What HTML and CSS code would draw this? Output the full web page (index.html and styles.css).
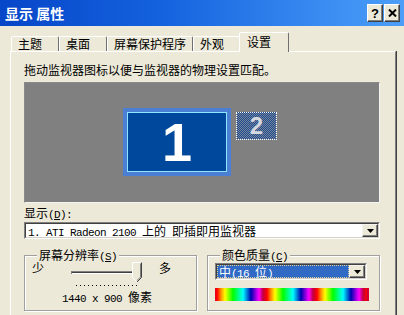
FILE: index.html
```html
<!DOCTYPE html>
<html lang="zh-CN">
<head>
<meta charset="utf-8">
<title>显示 属性</title>
<link rel="stylesheet" href="styles.css">
</head>
<body>
<div class="titlebar">
  <span class="title">显示 属性</span>
  <div class="tbtns">
    <span class="tbtn">?</span>
    <span class="tbtn"><svg width="9" height="8" viewBox="0 0 9 8"><path d="M1 0.5 L8 7.5 M8 0.5 L1 7.5" stroke="#000" stroke-width="2"/></svg></span>
  </div>
</div>
<div class="tabs">
  <div class="tab">主题</div>
  <div class="tab">桌面</div>
  <div class="tab">屏幕保护程序</div>
  <div class="tab">外观</div>
  <div class="tab active">设置</div>
</div>
<div class="panel">
  <p class="hint">拖动监视器图标以便与监视器的物理设置匹配。</p>
  <div class="canvas">
    <div class="mon mon1">1</div>
    <div class="mon mon2">2</div>
  </div>
  <div class="label">显示<span class="mono">(<u>D</u>):</span></div>
  <div class="select">
    <div class="select-in">
      <div class="val"><span class="mono">1. ATI Radeon 2100 </span>上的<span class="mono"> </span>即插即用监视器</div>
      <div class="drop"><svg width="7" height="4" viewBox="0 0 7 4"><path d="M0 0 H7 L3.5 4 Z" fill="#000"/></svg></div>
    </div>
  </div>
  <div class="groups">
    <fieldset class="group res">
      <legend>屏幕分辨率<span class="mono">(<u>S</u>)</span></legend>
      <div class="res-row">
        <span class="few">少</span>
        <svg class="slider" width="76" height="26" viewBox="0 0 76 26">
          <rect x="2" y="10" width="70" height="1" fill="#808080"/>
          <rect x="2" y="11" width="70" height="1" fill="#404040"/>
          <rect x="2" y="12" width="70" height="1" fill="#ffffff"/>
          <rect x="2" y="10" width="1" height="3" fill="#808080"/>
          <path d="M63.5 1.5 H72.5 V16.5 L68 21 L63.5 16.5 Z" fill="#ECE9D8"/>
          <path d="M63.5 16.5 V1.5 H72.5" stroke="#ffffff" fill="none"/>
          <path d="M63.5 16.5 L68 21" stroke="#ffffff" fill="none"/>
          <path d="M72.5 1.5 V16.5 L68 21" stroke="#404040" fill="none"/>
          <path d="M71.5 2.5 V16 L68 19.5" stroke="#808080" fill="none"/>
          <g fill="#000">
            <rect x="7" y="24" width="1" height="1"/><rect x="11" y="24" width="1" height="1"/>
            <rect x="15" y="24" width="1" height="1"/><rect x="19" y="24" width="1" height="1"/>
            <rect x="23" y="24" width="1" height="1"/><rect x="27" y="24" width="1" height="1"/>
            <rect x="31" y="24" width="1" height="1"/><rect x="35" y="24" width="1" height="1"/>
            <rect x="39" y="24" width="1" height="1"/><rect x="43" y="24" width="1" height="1"/>
            <rect x="47" y="24" width="1" height="1"/><rect x="51" y="24" width="1" height="1"/>
            <rect x="55" y="24" width="1" height="1"/><rect x="59" y="24" width="1" height="1"/>
            <rect x="63" y="24" width="1" height="1"/><rect x="67" y="24" width="1" height="1"/>
          </g>
        </svg>
        <span class="many">多</span>
      </div>
      <div class="res-text"><span class="mono">1440 x 900 </span>像素</div>
    </fieldset>
    <fieldset class="group colors">
      <legend>颜色质量<span class="mono">(<u>C</u>)</span></legend>
      <div class="select small">
        <div class="select-in">
          <div class="val hl">中<span class="mono">(16 </span>位<span class="mono">)</span></div>
          <div class="drop"><svg width="7" height="4" viewBox="0 0 7 4"><path d="M0 0 H7 L3.5 4 Z" fill="#000"/></svg></div>
        </div>
      </div>
      <div class="rainbow"></div>
    </fieldset>
  </div>
</div>
</body>
</html>
```
FILE: styles.css
```css
* { box-sizing: border-box; }
html, body { margin: 0; padding: 0; }
body {
  width: 404px;
  height: 315px;
  overflow: hidden;
  background: #ECE9D8;
  font-family: "Noto Sans CJK SC", sans-serif;
  font-size: 12px;
  line-height: 14px;
  color: #000;
}
.mono {
  font-family: "Liberation Mono", "Noto Sans CJK SC", monospace;
  font-size: 11px;
  letter-spacing: -0.6px;
  line-height: 10px;
}

.titlebar {
  height: 26px;
  display: flex;
  align-items: center;
  padding: 0 4px 0 5px;
  background: linear-gradient(to right, #0646c8 0%, #1462de 40%, #3a8cf2 80%, #4c9ef7 100%);
}
.title { flex: 1; color: #fff; font-weight: bold; font-size: 14px; line-height: 16px; }
.tbtns { display: flex; gap: 1px; }
.tbtn {
  width: 16px;
  height: 18px;
  display: flex;
  align-items: center;
  justify-content: center;
  background: #ECE9D8;
  border: 1px solid;
  border-color: #fff #404040 #404040 #fff;
  box-shadow: inset -1px -1px 0 #808080;
  font: bold 13px/1 "Liberation Sans", sans-serif;
}

.tabs {
  display: flex;
  align-items: flex-end;
  height: 25px;
  padding-left: 11px;
  position: relative;
  z-index: 1;
}
.tab {
  min-width: 48px;
  height: 15px;
  padding: 0 6px;
  border: 1px solid;
  border-bottom: none;
  border-color: #fff #707070 transparent #fff;
  border-radius: 2px 2px 0 0;
  white-space: nowrap;
  background: #ECE9D8;
}
.tab.active {
  min-width: 50px;
  height: 20px;
  margin: 0 -2px -1px -2px;
  padding: 2px 6px 0 7px;
  position: relative;
}

.panel {
  margin: 0 8px 0 10px;
  height: 270px;
  padding: 11px 15px 0 13px;
  border-top: 1px solid #fff;
  border-left: 1px solid #fff;
  border-right: 1px solid #808080;
  box-shadow: 1px 0 0 #404040;
}
.hint { margin: 0 0 5px; }

.canvas {
  position: relative;
  height: 121px;
  background: #808080;
  border: 1px solid;
  border-color: #8a8a8a #f4f4f4 #f4f4f4 #8a8a8a;
}
.mon {
  position: absolute;
  display: flex;
  align-items: center;
  justify-content: center;
  font-family: "Liberation Sans", sans-serif;
  font-weight: bold;
  line-height: 1;
}
.mon1 {
  left: 98px;
  top: 25px;
  width: 108px;
  height: 68px;
  border: 4px solid #4a7fd3;
  background: #00489c;
  box-shadow: inset 0 0 0 1px #8fe6ff;
  color: #fff;
  font-size: 54px;
}
.mon2 {
  left: 211px;
  top: 29px;
  width: 41px;
  height: 28px;
  border: 1px dotted #fff;
  background: repeating-conic-gradient(#184c96 0 25%, #7c8494 0 50%) 0 0 / 2px 2px;
  color: #d6d8e0;
  font-size: 24px;
}

.label { margin-top: 3px; height: 14px; }
.select {
  margin-top: 2px;
  height: 17px;
  border: 1px solid;
  border-color: #808080 #fff #fff #808080;
}
.select-in {
  display: flex;
  height: 100%;
  background: #fff;
  border: 1px solid;
  border-color: #404040 #d4d0c8 #d4d0c8 #404040;
}
.val {
  flex: 1;
  padding-left: 2px;
  line-height: 13px;
  white-space: nowrap;
}
.drop {
  width: 16px;
  display: flex;
  align-items: center;
  justify-content: center;
  background: #ECE9D8;
  border: 1px solid;
  border-color: #f4f3ee #404040 #404040 #f4f3ee;
  box-shadow: inset -1px -1px 0 #808080;
}

.groups {
  display: flex;
  gap: 10px;
  margin-top: 9px;
}
.group {
  flex: 1;
  min-width: 0;
  height: 63px;
  margin: 0;
  padding: 0 0 0 7px;
  border: 1px solid #a0a0a0;
  box-shadow: inset 1px 1px 0 #fff, 1px 1px 0 #fff;
}
.group legend {
  margin-left: 5px;
  padding: 0 2px;
  height: 14px;
  line-height: 14px;
  background: #ECE9D8;
}
.res-row { display: flex; align-items: flex-start; height: 25px; }
.few { width: 37px; line-height: 12px; }
.slider { display: block; margin-top: -1px; }
.many { margin-left: 14px; line-height: 12px; }
.res-text { margin-top: 3px; padding-left: 30px; height: 14px; }

.select.small { width: 152px; margin-top: 1px; }
.val.hl {
  padding-left: 1px;
  background: #316AC5;
  color: #fff;
  border: 1px dotted #d8d098;
  line-height: 11px;
}
.rainbow {
  width: 154px;
  height: 13px;
  margin-top: 8px;
  background: repeating-linear-gradient(90deg,
    #c00040 0px, #ff0000 4px, #ff9000 8px, #ffff00 12px, #00ff00 20px,
    #00ffff 30px, #0000b0 38px, #ff00ff 46px, #c00040 50px);
  background-position: -2px 0;
}
```
